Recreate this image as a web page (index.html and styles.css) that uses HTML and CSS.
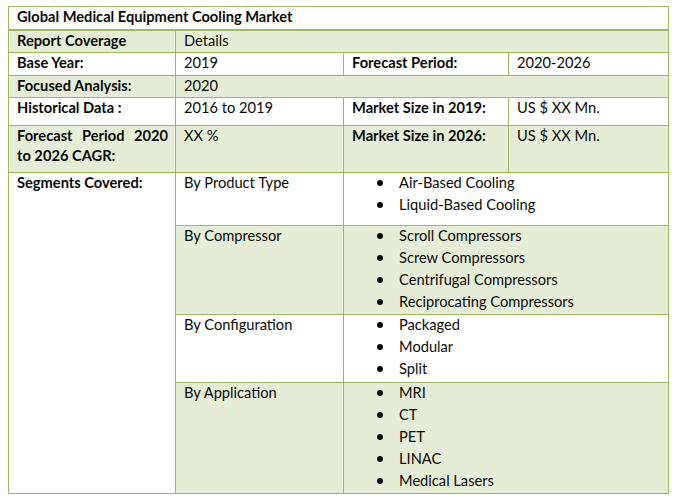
FILE: index.html
```html
<!DOCTYPE html>
<html>
<head>
<meta charset="utf-8">
<link rel="stylesheet" href="styles.css">
</head>
<body>
<table class="report">
  <colgroup>
    <col class="c1"><col class="c2"><col class="c3"><col class="c4">
  </colgroup>
  <tr class="r-title">
    <td colspan="4" class="b">Global Medical Equipment Cooling Market</td>
  </tr>
  <tr class="r-head shade">
    <td class="b">Report Coverage</td>
    <td colspan="3">Details</td>
  </tr>
  <tr class="r-base">
    <td class="b">Base Year:</td>
    <td>2019</td>
    <td class="b">Forecast Period:</td>
    <td>2020-2026</td>
  </tr>
  <tr class="r-focus shade">
    <td class="b">Focused Analysis:</td>
    <td colspan="3">2020</td>
  </tr>
  <tr class="r-hist">
    <td class="b">Historical Data :</td>
    <td>2016 to 2019</td>
    <td class="b">Market Size in 2019:</td>
    <td>US $ XX Mn.</td>
  </tr>
  <tr class="r-cagr shade">
    <td class="b just">Forecast Period 2020 to 2026 CAGR:</td>
    <td>XX %</td>
    <td class="b">Market Size in 2026:</td>
    <td>US $ XX Mn.</td>
  </tr>
  <tr class="r-prod">
    <td class="b white" rowspan="4">Segments Covered:</td>
    <td>By Product Type</td>
    <td colspan="2" class="list-cell">
      <ul class="bullets">
        <li>Air-Based Cooling</li>
        <li>Liquid-Based Cooling</li>
      </ul>
    </td>
  </tr>
  <tr class="r-comp shade">
    <td>By Compressor</td>
    <td colspan="2" class="list-cell">
      <ul class="bullets">
        <li>Scroll Compressors</li>
        <li>Screw Compressors</li>
        <li>Centrifugal Compressors</li>
        <li>Reciprocating Compressors</li>
      </ul>
    </td>
  </tr>
  <tr class="r-conf">
    <td>By Configuration</td>
    <td colspan="2" class="list-cell">
      <ul class="bullets">
        <li>Packaged</li>
        <li>Modular</li>
        <li>Split</li>
      </ul>
    </td>
  </tr>
  <tr class="r-app shade">
    <td>By Application</td>
    <td colspan="2" class="list-cell">
      <ul class="bullets">
        <li>MRI</li>
        <li>CT</li>
        <li>PET</li>
        <li>LINAC</li>
        <li>Medical Lasers</li>
      </ul>
    </td>
  </tr>
</table>
</body>
</html>
```

FILE: styles.css
```css
html, body {
  background: #ffffff;
}
body {
  margin: 6px 0 0 8px;
  font-family: Lato, "Liberation Sans", sans-serif;
  font-size: 14.67px;
  line-height: 19px;
  color: #0a0a0a;
}
.report {
  border-collapse: collapse;
  table-layout: fixed;
  width: 660px;
  border: 1px solid #9bbb59;
}
.c1 { width: 167px; }
.c2 { width: 168px; }
.c3 { width: 165px; }
.c4 { width: 160px; }
.report td {
  border: 1px solid #9bbb59;
  padding: 0 7px 0 8px;
  vertical-align: top;
}
.report .r-title td {
  border-bottom: 2px solid #9bbb59;
}
.shade td {
  background: #e5edd6;
}
.shade td.white, td.white {
  background: #ffffff;
}
.b { font-weight: 700; }
.report td.just {
  text-align: justify;
  line-height: 20px;
}
.r-title { height: 23px; }
.r-head { height: 23px; }
.r-base { height: 23px; }
.r-focus { height: 22px; }
.r-hist { height: 28px; }
.r-cagr { height: 47px; }
.r-prod { height: 53px; }
.r-comp { height: 89px; }
.r-conf { height: 68px; }
.r-app { height: 111px; }
.report td.list-cell { padding-left: 0; }
.bullets {
  list-style: none;
  margin: 0;
  padding: 0 0 0 33px;
}
.bullets li {
  display: flex;
  align-items: flex-start;
  height: 22px;
}
.bullets li::before {
  content: "";
  width: 6px;
  height: 6px;
  margin-top: 7px;
  border-radius: 50%;
  background: #0a0a0a;
  margin-right: 16px;
  flex: none;
}
```
